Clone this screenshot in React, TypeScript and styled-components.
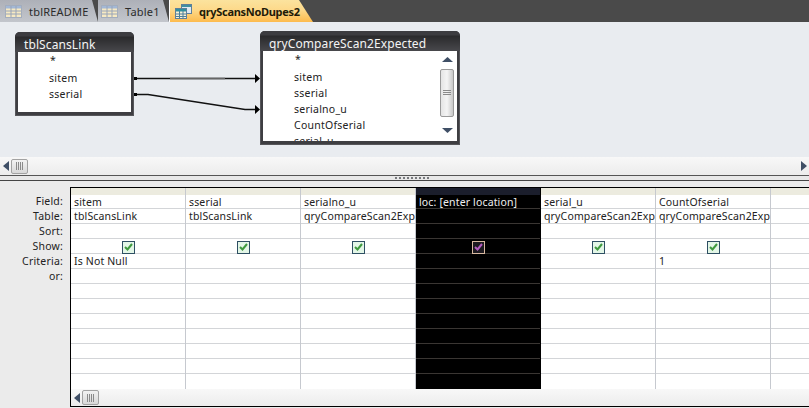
import React from "react";
import styled, { createGlobalStyle } from "styled-components";

const Global = createGlobalStyle`
  html, body { margin: 0; padding: 0; background: #ebebeb; }
  * { box-sizing: border-box; }
`;
const FONT = `"Noto Sans", "Liberation Sans", sans-serif`;

const Page = styled.div`
  width: 809px; height: 408px; overflow: hidden; display: flex; flex-direction: column;
  font-family: ${FONT}; font-size: 10.5px; color: #222; background: #ebebeb;
`;
const TabBar = styled.div`
  height: 22px; flex: none; display: flex; background: #4a4a4a; overflow: hidden;
`;
const Tab = styled.div<{ $w: number; $pad: number }>`
  width: ${(p) => p.$w}px; padding-left: ${(p) => p.$pad}px; height: 22px; flex: none;
  display: flex; align-items: center; gap: 7px; font-size: 11px; letter-spacing: 0.2px; color: #2b2b2b;
  background: linear-gradient(#adb0b8, #c3c6cc);
  clip-path: polygon(0 0, calc(100% - 6px) 0, 100% 100%, 0 100%);
`;
const ActiveTab = styled.div`
  width: 144px; height: 22px; flex: none; padding-left: 5px; display: flex; align-items: center; gap: 7px;
  font-size: 11px; font-weight: 700; letter-spacing: -0.3px; color: #221a08;
  background: linear-gradient(#fbe39e 0%, #fdd98a 45%, #fdbb4d 100%);
  border-left: 1px solid #fff;
  clip-path: polygon(0 0, 130px 0, 100% 100%, 0 100%);
`;
const Canvas = styled.div`
  height: 135px; flex: none; position: relative; background: #e9ecf0; overflow: hidden;
`;
const Wires = styled.svg`
  position: absolute; left: 0; top: 0;
`;
const Node = styled.div<{ $x: number; $y: number; $w: number; $h: number }>`
  position: absolute; left: ${(p) => p.$x}px; top: ${(p) => p.$y}px; width: ${(p) => p.$w}px; height: ${(p) => p.$h}px;
  display: flex; flex-direction: column; background: #3e3e42; border-radius: 5px 5px 0 0;
  padding: 0 3px 4px 3px; box-shadow: 0 0 0 1px #56565a inset;
`;
const NodeTitle = styled.div`
  height: 20px; flex: none; margin: 0 -3px; padding: 4px 0 0 9px; color: #f4f4f4; font-size: 12px; letter-spacing: 0.1px; line-height: 17px;
  background: linear-gradient(#3c3c40 0 4px, #2a2a2c 5px, #48484c 100%); border-radius: 5px 5px 0 0; white-space: nowrap;
`;
const NodeBody = styled.div`
  flex: 1; background: #fff; display: flex; overflow: hidden; min-height: 0;
`;
const FieldList = styled.div`
  flex: 1; padding: 0 0 0 31px; min-width: 0;
`;
const FieldRow = styled.div<{ $star?: boolean }>`
  height: 16px; line-height: 16px; white-space: nowrap; letter-spacing: 0.25px; color: #222;
  padding-left: ${(p) => (p.$star ? 1 : 0)}px;
`;
const StarRow = styled(FieldRow)`
  height: 18px; line-height: 16px;
`;
const VScroll = styled.div`
  width: 17px; flex: none; display: flex; flex-direction: column; align-items: center; padding: 6px 3px 0 0;
`;
const VThumb = styled.div`
  width: 14px; height: 48px; margin: 7px 0 11px; border: 1px solid #9a9a9a; border-radius: 2px;
  background: linear-gradient(90deg, #e4e4e4, #f4f4f4 50%, #c8c8c8); display: flex; align-items: center; justify-content: center;
`;
const HScrollBar = styled.div<{ $h: number }>`
  height: ${(p) => p.$h}px; flex: none; display: flex; align-items: center; padding: 0 2px 0 3px;
  background: linear-gradient(#f8f8f8, #ececec);
`;
const HThumb = styled.div`
  width: 17px; height: 15px; margin-left: 2px; border: 1px solid #a2a2a2; border-radius: 2px;
  background: linear-gradient(#f2f2f2, #d8d8d8); display: flex; align-items: center; justify-content: center;
`;
const Spacer = styled.div`
  flex: 1;
`;
const Splitter = styled.div`
  height: 6px; flex: none; display: flex; align-items: center; justify-content: center;
  background: #e8e8e8; border-top: 1px solid #555; border-bottom: 1px solid #444;
`;
const Dots = styled.div`
  width: 35px; height: 2px; margin-left: 16px;
  background: repeating-linear-gradient(90deg, #77797d 0 2px, transparent 2px 4px);
`;
const Lower = styled.div`
  flex: 1; display: flex; padding: 6px 0 1px 0; min-height: 0; background: #ebebeb;
`;
const Labels = styled.div`
  width: 70px; flex: none; padding-top: 7px; display: flex; flex-direction: column; align-items: flex-end; padding-right: 7px;
`;
const Label = styled.div`
  height: 15px; line-height: 15px; color: #222; letter-spacing: 0.2px; white-space: nowrap;
`;
const GridFrame = styled.div`
  flex: 1; min-width: 0; display: flex; flex-direction: column; border: solid #000; border-width: 1px 0 1px 1px; background: #fff; overflow: hidden;
`;
const Grid = styled.div`
  flex: 1; min-height: 0; display: flex; overflow: hidden;
`;
const Col = styled.div<{ $w: number; $sel?: boolean }>`
  width: ${(p) => p.$w}px; flex: none; display: flex; flex-direction: column;
  background: ${(p) => (p.$sel ? "#000" : "#fff")};
  border-right: 1px solid ${(p) => (p.$sel ? "#000" : "#c6c9cf")};
`;
const ColHead = styled.div<{ $sel?: boolean }>`
  height: 7px; flex: none; background: ${(p) => (p.$sel ? "#1b1e2c" : "#ecebdf")};
`;
const Cell = styled.div<{ $sel?: boolean; $first?: boolean }>`
  height: ${(p) => (p.$first ? 14 : 15)}px; flex: none; display: flex; align-items: center; padding: 0 0 0 3px;
  border-bottom: 1px solid ${(p) => (p.$sel ? "#3a3633" : "#d3d5d8")};
  color: ${(p) => (p.$sel ? "#f0f0f0" : "#222")}; letter-spacing: 0.15px; white-space: nowrap; overflow: hidden;
`;
const CheckCell = styled(Cell)`
  justify-content: center; padding: 2px 0 0 0; overflow: visible;
`;
const Check = styled.div<{ $sel?: boolean }>`
  width: 13px; height: 13px; flex: none; display: flex; align-items: center; justify-content: center;
  border: 1px solid ${(p) => (p.$sel ? "#d8b9a0" : "#2e4f63")};
  background: ${(p) => (p.$sel ? "#1d1a20" : "#e3f6e7")};
`;
const CellRest = styled.div`
  flex: 1; min-height: 0;
`;

const TableIcon = () => (
  <svg width="17" height="13" viewBox="0 0 17 13">
    <rect x="0.5" y="0.5" width="16" height="12" fill="#f6e9c3" stroke="#a3adbd" />
    <rect x="1" y="1" width="15" height="2.5" fill="#a3b8d6" />
    <path d="M6 1v11M11 1v11M1 6h15M1 9h15" stroke="#98a4b8" strokeWidth="1" />
  </svg>
);
const QueryIcon = () => (
  <svg width="17" height="15" viewBox="0 0 17 15">
    <rect x="6.5" y="0.5" width="10" height="9" fill="#dfe9f2" stroke="#5e7f9a" />
    <rect x="7" y="1" width="9" height="2" fill="#3f8fa0" />
    <rect x="0.5" y="4.5" width="11" height="10" fill="#f8f1d8" stroke="#5e7f9a" />
    <rect x="1" y="5" width="10" height="2.5" fill="#2f8f9f" />
    <path d="M4.5 7v7M8 7v7M1 10h10M1 12.5h10" stroke="#4a7f9a" />
  </svg>
);
const Grip = ({ vertical }: { vertical?: boolean }) =>
  vertical ? (
    <svg width="8" height="6" viewBox="0 0 8 6">
      <path d="M0 .5h8M0 2.5h8M0 4.5h8" stroke="#8a8a8a" />
    </svg>
  ) : (
    <svg width="7" height="8" viewBox="0 0 7 8">
      <path d="M.5 0v8M2.5 0v8M4.5 0v8M6.5 0v8" stroke="#8a8a8a" />
    </svg>
  );
const Arrow = ({ dir }: { dir: "left" | "right" | "up" | "down" }) => {
  const d = { left: "M6 0L0 5l6 5z", right: "M0 0l6 5-6 5z", up: "M0 5L5.5 0 11 5z", down: "M0 0l5.5 5L11 0z" }[dir];
  const v = dir === "up" || dir === "down";
  return (
    <svg width={v ? 11 : 6} height={v ? 5 : 10} viewBox={v ? "0 0 11 5" : "0 0 6 10"}>
      <path d={d} fill="#3f4f66" />
    </svg>
  );
};
const Tick = ({ sel }: { sel?: boolean }) => (
  <svg width="9" height="8" viewBox="0 0 9 8">
    <path d="M1 4l2.5 2.5L8 1" fill="none" stroke={sel ? "#b45cc0" : "#3f9a3f"} strokeWidth="2" />
  </svg>
);

type C = { w: number; field?: string; table?: string; crit?: string; sel?: boolean; show?: boolean };
const cols: C[] = [
  { w: 115, field: "sitem", table: "tblScansLink", crit: "Is Not Null", show: true },
  { w: 115, field: "sserial", table: "tblScansLink", show: true },
  { w: 115, field: "serialno_u", table: "qryCompareScan2Exp", show: true },
  { w: 125, field: "loc: [enter location]", sel: true, show: true },
  { w: 115, field: "serial_u", table: "qryCompareScan2Exp", show: true },
  { w: 115, field: "CountOfserial", table: "qryCompareScan2Exp", crit: "1", show: true },
  { w: 60 },
];

export default function App() {
  return (
    <Page>
      <Global />
      <TabBar>
        <Tab $w={98} $pad={5}><TableIcon />tblREADME</Tab>
        <Tab $w={71} $pad={3}><TableIcon />Table1</Tab>
        <ActiveTab><QueryIcon />qryScansNoDupes2</ActiveTab>
      </TabBar>
      <Canvas>
        <Wires width="809" height="135" viewBox="0 0 809 135">
          <path d="M134 56.5H255" stroke="#111" strokeWidth="1.4" fill="none" />
          <path d="M170 56.5H225" stroke="#666" strokeWidth="1.4" fill="none" />
          <path d="M134 72.5H148L245 87.5H256" stroke="#111" strokeWidth="1.4" fill="none" />
          <path d="M134 55h3v3h-3zM134 71h3v3h-3z" fill="#000" />
          <path d="M255 52l5 4.5-5 4.5zM255 83l5 4.5-5 4.5z" fill="#000" />
        </Wires>
        <Node $x={15} $y={10} $w={119} $h={84}>
          <NodeTitle>tblScansLink</NodeTitle>
          <NodeBody>
            <FieldList>
              <StarRow $star>*</StarRow>
              <FieldRow>sitem</FieldRow>
              <FieldRow>sserial</FieldRow>
            </FieldList>
          </NodeBody>
        </Node>
        <Node $x={260} $y={9} $w={200} $h={114}>
          <NodeTitle>qryCompareScan2Expected</NodeTitle>
          <NodeBody>
            <FieldList>
              <StarRow $star>*</StarRow>
              <FieldRow>sitem</FieldRow>
              <FieldRow>sserial</FieldRow>
              <FieldRow>serialno_u</FieldRow>
              <FieldRow>CountOfserial</FieldRow>
              <FieldRow>serial_u</FieldRow>
            </FieldList>
            <VScroll>
              <Arrow dir="up" />
              <VThumb><Grip vertical /></VThumb>
              <Arrow dir="down" />
            </VScroll>
          </NodeBody>
        </Node>
      </Canvas>
      <HScrollBar $h={18}>
        <Arrow dir="left" />
        <HThumb><Grip /></HThumb>
        <Spacer />
        <Arrow dir="right" />
      </HScrollBar>
      <Splitter><Dots /></Splitter>
      <Lower>
        <Labels>
          {["Field:", "Table:", "Sort:", "Show:", "Criteria:", "or:"].map((l) => (
            <Label key={l}>{l}</Label>
          ))}
        </Labels>
        <GridFrame>
          <Grid>
            {cols.map((c, i) => (
              <Col key={i} $w={c.w} $sel={c.sel}>
                <ColHead $sel={c.sel} />
                <Cell $first $sel={c.sel}>{c.field}</Cell>
                <Cell $sel={c.sel}>{c.table}</Cell>
                <Cell $sel={c.sel} />
                <CheckCell $sel={c.sel}>
                  {c.show && <Check $sel={c.sel}><Tick sel={c.sel} /></Check>}
                </CheckCell>
                <Cell $sel={c.sel}>{c.crit}</Cell>
                {Array.from({ length: 7 }).map((_, j) => (
                  <Cell key={j} $sel={c.sel} />
                ))}
                <CellRest />
              </Col>
            ))}
          </Grid>
          <HScrollBar $h={17}>
            <Arrow dir="left" />
            <HThumb><Grip /></HThumb>
            <Spacer />
          </HScrollBar>
        </GridFrame>
      </Lower>
    </Page>
  );
}
